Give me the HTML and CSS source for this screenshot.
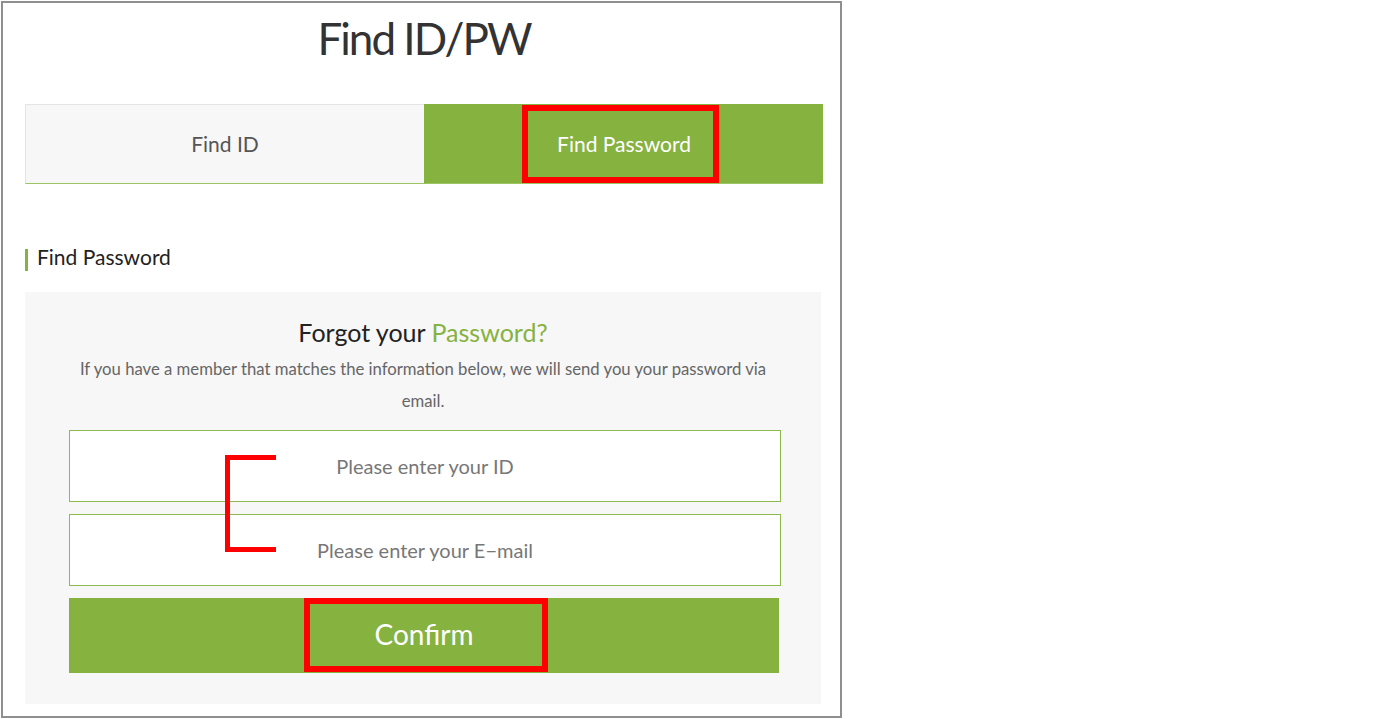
FILE: index.html
```html
<html>
<head>
<meta http-equiv="Content-Type" content="text/html; charset=utf-8">
<title>Find ID/PW</title>
<link rel="stylesheet" href="styles.css">
</head>

<body>
<div id="find-wrap">
	<h1 class="find-title">Find ID/PW</h1>
	<div class="find-tab">
		<a href="#">Find ID</a>
		<a href="#" class="on">Find Password</a>
	</div>
	<h2 class="sub-title">Find Password</h2>
	<div class="find-box">
		<h3>Forgot your <span>Password?</span></h3>
		<p>If you have a member that matches the information below, we will send you your password via email.</p>
		<form class="find-form" action="#">
			<input type="text" placeholder="Please enter your ID" />
			<input type="text" placeholder="Please enter your E−mail" />
			<button type="button">Confirm</button>
		</form>
	</div>
</div>
<div class="mark mark-tab"></div>
<div class="mark mark-input"></div>
<div class="mark mark-btn"></div>
</body>
</html>
```

FILE: styles.css
```css
body{
	margin:0;
	font-family:Lato, "Noto Sans", sans-serif;
	background:#fff;
}
#find-wrap{
	width:798px;
	height:713px;
	margin:1px 0 0 1px;
	padding:0 17px 0 22px;
	border:2px solid #8f8f8f;
}
.find-title{
	margin:9px 0 39px;
	font-size:44px;
	line-height:53px;
	font-weight:400;
	letter-spacing:-2px;
	color:#333;
	text-align:center;
}
.find-tab{
	display:flex;
	height:80px;
}
.find-tab a{
	flex:1;
	display:flex;
	align-items:center;
	justify-content:center;
	box-sizing:border-box;
	padding-bottom:2px;
	font-size:21px;
	color:#555;
	text-decoration:none;
	background:#f7f7f7;
	border-top:1px solid #e4e4e4;
	border-left:1px solid #e4e4e4;
	border-bottom:1px solid #9cc462;
}
.find-tab a.on{
	color:#fff;
	background:#86b240;
	border-color:#86b240;
	border-bottom-color:#9cc462;
}
.sub-title{
	margin:65px 0 21px;
	padding:0 0 6px 9px;
	border-left:3px solid #86b240;
	font-size:21px;
	line-height:16px;
	font-weight:400;
	color:#222;
}
.find-box{
	width:796px;
	padding:25px 0 31px;
	background:#f7f7f7;
	text-align:center;
}
.find-box h3{
	margin:0;
	font-size:25px;
	line-height:30px;
	font-weight:400;
	color:#222;
}
.find-box h3 span{
	color:#86b240;
}
.find-box p{
	margin:6px auto 13px;
	width:710px;
	font-size:16.7px;
	line-height:32px;
	color:#666;
}
.find-form{
	display:flex;
	flex-direction:column;
	gap:12px;
	margin:0 0 0 44px;
	width:712px;
}
.find-form input{
	box-sizing:border-box;
	width:712px;
	height:72px;
	padding-bottom:2px;
	border:1px solid #8dba4c;
	background:#fff;
	font-family:Lato, "Noto Sans", sans-serif;
	font-size:20px;
	text-align:center;
	color:#333;
	outline:none;
}
.find-form input::placeholder{
	color:#777;
}
.find-form button{
	width:710px;
	height:75px;
	padding:0 0 4px;
	border:0;
	background:#86b240;
	font-family:Lato, "Noto Sans", sans-serif;
	font-size:28px;
	color:#fff;
	cursor:pointer;
}
/* red annotation boxes */
.mark{
	position:absolute;
	box-sizing:border-box;
	border:6px solid #ff0000;
}
.mark-tab{
	left:522px;
	top:105px;
	width:197px;
	height:78px;
}
.mark-btn{
	left:304px;
	top:598px;
	width:244px;
	height:74px;
}
.mark-input{
	left:225px;
	top:455px;
	width:51px;
	height:97px;
	border-width:5px 0 5px 5px;
}
```
